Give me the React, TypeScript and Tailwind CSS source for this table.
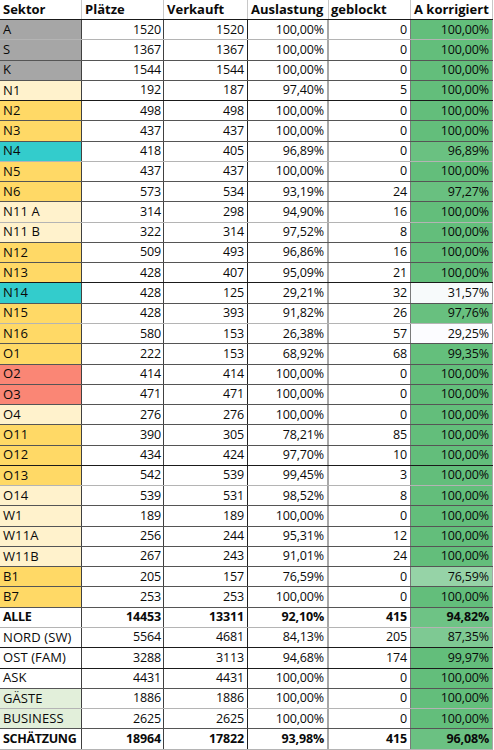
import React from 'react';

type Fill = 'gray' | 'gold' | 'light' | 'teal' | 'salmon' | 'mint' | 'white';
type Line = 'dark' | 'gray' | 'black';

interface Row {
  sektor: string;
  plaetze: string;
  verkauft: string;
  auslastung: string;
  geblockt: string;
  korrigiert: string;
  fill: Fill;
  line: Line;
  bold?: boolean;
}

const fillClass: Record<Fill, string> = {
  gray: 'bg-[#a6a6a6]',
  gold: 'bg-[#ffd966]',
  light: 'bg-[#fff2cc]',
  teal: 'bg-[#33cccc]',
  salmon: 'bg-[#fa8675]',
  mint: 'bg-[#e2efda]',
  white: 'bg-white',
};

const lineClass: Record<Line, string> = {
  dark: 'border-[#555555]',
  gray: 'border-[#b4b4b4]',
  black: 'border-[#1a1a1a]',
};

const r = (
  sektor: string,
  plaetze: string,
  verkauft: string,
  auslastung: string,
  geblockt: string,
  korrigiert: string,
  fill: Fill,
  line: Line = 'dark',
  bold = false,
): Row => ({ sektor, plaetze, verkauft, auslastung, geblockt, korrigiert, fill, line, bold });

const rows: Row[] = [
  r('A', '1520', '1520', '100,00%', '0', '100,00%', 'gray', 'gray'),
  r('S', '1367', '1367', '100,00%', '0', '100,00%', 'gray'),
  r('K', '1544', '1544', '100,00%', '0', '100,00%', 'gray'),
  r('N1', '192', '187', '97,40%', '5', '100,00%', 'light', 'black'),
  r('N2', '498', '498', '100,00%', '0', '100,00%', 'gold'),
  r('N3', '437', '437', '100,00%', '0', '100,00%', 'gold'),
  r('N4', '418', '405', '96,89%', '0', '96,89%', 'teal', 'gray'),
  r('N5', '437', '437', '100,00%', '0', '100,00%', 'gold'),
  r('N6', '573', '534', '93,19%', '24', '97,27%', 'gold'),
  r('N11 A', '314', '298', '94,90%', '16', '100,00%', 'light', 'gray'),
  r('N11 B', '322', '314', '97,52%', '8', '100,00%', 'light'),
  r('N12', '509', '493', '96,86%', '16', '100,00%', 'gold'),
  r('N13', '428', '407', '95,09%', '21', '100,00%', 'gold', 'black'),
  r('N14', '428', '125', '29,21%', '32', '31,57%', 'teal'),
  r('N15', '428', '393', '91,82%', '26', '97,76%', 'gold', 'gray'),
  r('N16', '580', '153', '26,38%', '57', '29,25%', 'gold'),
  r('O1', '222', '153', '68,92%', '68', '99,35%', 'gold'),
  r('O2', '414', '414', '100,00%', '0', '100,00%', 'salmon'),
  r('O3', '471', '471', '100,00%', '0', '100,00%', 'salmon'),
  r('O4', '276', '276', '100,00%', '0', '100,00%', 'light'),
  r('O11', '390', '305', '78,21%', '85', '100,00%', 'gold'),
  r('O12', '434', '424', '97,70%', '10', '100,00%', 'gold', 'black'),
  r('O13', '542', '539', '99,45%', '3', '100,00%', 'gold', 'gray'),
  r('O14', '539', '531', '98,52%', '8', '100,00%', 'light'),
  r('W1', '189', '189', '100,00%', '0', '100,00%', 'light'),
  r('W11A', '256', '244', '95,31%', '12', '100,00%', 'light'),
  r('W11B', '267', '243', '91,01%', '24', '100,00%', 'light'),
  r('B1', '205', '157', '76,59%', '0', '76,59%', 'gold'),
  r('B7', '253', '253', '100,00%', '0', '100,00%', 'gold'),
  r('ALLE', '14453', '13311', '92,10%', '415', '94,82%', 'white', 'gray', true),
  r('NORD (SW)', '5564', '4681', '84,13%', '205', '87,35%', 'white', 'black'),
  r('OST (FAM)', '3288', '3113', '94,68%', '174', '99,97%', 'white', 'black'),
  r('ASK', '4431', '4431', '100,00%', '0', '100,00%', 'white'),
  r('GÄSTE', '1886', '1886', '100,00%', '0', '100,00%', 'mint', 'gray'),
  r('BUSINESS', '2625', '2625', '100,00%', '0', '100,00%', 'mint'),
  r('SCHÄTZUNG', '18964', '17822', '93,98%', '415', '96,08%', 'white', 'gray', true),
];

// Excel 2-colour scale: white (#FCFCFF) at min -> green (#63BE7B) at max
const scale = (value: string) => {
  const v = parseFloat(value.replace(',', '.'));
  const t = Math.max(0, Math.min(1, (v - 29.25) / (100 - 29.25)));
  const mix = (a: number, b: number) => Math.round(a + (b - a) * t);
  return `rgb(${mix(252, 99)}, ${mix(252, 190)}, ${mix(255, 123)})`;
};

const cell = 'flex items-end h-full overflow-hidden whitespace-nowrap';

export default function App() {
  return (
    <div
      className="w-[494px] h-[750px] overflow-hidden bg-white text-[12.5px] text-[#0a0a0a] tracking-[-0.15px]"
      style={{ fontFamily: '"Open Sans", "Liberation Sans", sans-serif' }}
    >
      <div className="w-[493px]">
        <div className="flex h-5 border-b border-[#1a1a1a] font-bold text-[13px] tracking-[0px]">
          <div className={`${cell} w-[82px] pl-[3px] border-r border-[#c8c8c8]`}>Sektor</div>
          <div className={`${cell} w-[82px] pl-[3px] border-r border-[#c8c8c8]`}>Plätze</div>
          <div className={`${cell} w-[84px] pl-[3px] border-r border-[#c8c8c8]`}>Verkauft</div>
          <div className={`${cell} w-[81px] pl-[3px] border-r border-[#c8c8c8]`}>Auslastung</div>
          <div className={`${cell} w-[82px] pl-[2px] border-r border-[#c8c8c8]`}>geblockt</div>
          <div className={`${cell} w-[82px] pl-[3px] border-r border-[#c8c8c8]`}>A korrigiert</div>
        </div>

        {rows.map((row) => (
          <div
            key={row.sektor}
            className={`flex h-[20.27px] border-b ${lineClass[row.line]} ${row.bold ? 'font-bold' : ''}`}
          >
            <div
              className={`${cell} w-[82px] pl-[3px] border-r border-[#404040] ${fillClass[row.fill]} ${
                row.bold ? 'text-[12.5px] tracking-[-0.3px]' : 'text-[13px] tracking-[0.1px]'
              }`}
            >
              {row.sektor}
            </div>
            <div className={`${cell} w-[82px] justify-end pr-[2px] border-r border-[#404040]`}>{row.plaetze}</div>
            <div className={`${cell} w-[84px] justify-end pr-[3px] border-r border-[#222]`}>{row.verkauft}</div>
            <div className={`${cell} w-[81px] justify-end pr-[3px] border-r-2 border-[#a8a8a8]`}>{row.auslastung}</div>
            <div className={`${cell} w-[82px] justify-end pr-[3px] border-r border-[#7a7a7a]`}>{row.geblockt}</div>
            <div
              className={`${cell} w-[82px] justify-end pr-[3px] border-r border-[#a8a8a8]`}
              style={{ backgroundColor: scale(row.korrigiert) }}
            >
              {row.korrigiert}
            </div>
          </div>
        ))}
      </div>
    </div>
  );
}
